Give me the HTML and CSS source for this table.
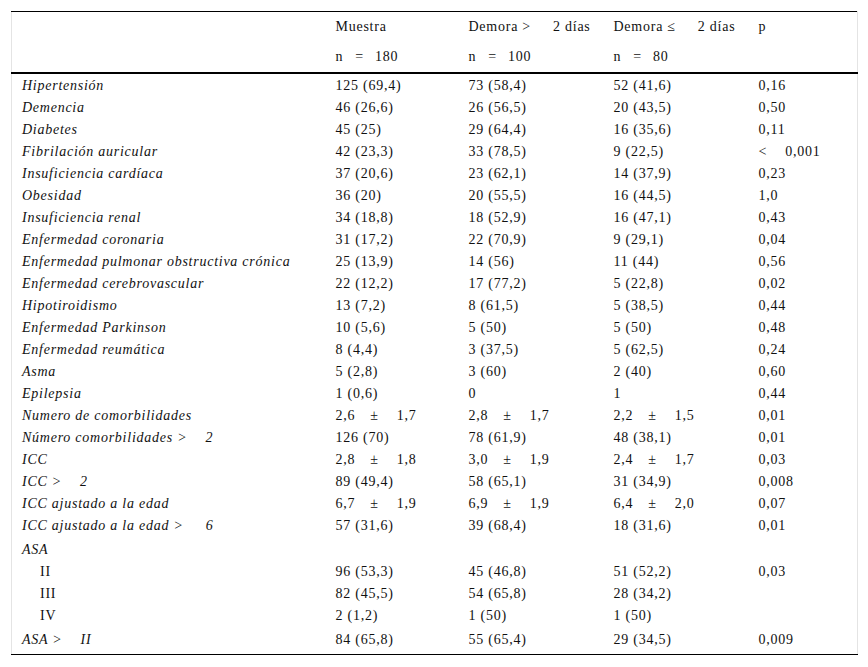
FILE: index.html
```html
<!DOCTYPE html>
<html lang="es">
<head>
<meta charset="utf-8">
<link rel="stylesheet" href="styles.css">
</head>
<body>
<div class="frame">
<table class="data">
<colgroup>
<col class="c1"><col class="c2"><col class="c3"><col class="c4"><col class="c5">
</colgroup>
<thead>
<tr class="h1"><th></th><th>Muestra</th><th>Demora &gt;<span class="hg"></span>2 días</th><th>Demora ≤<span class="hg2"></span>2 días</th><th>p</th></tr>
<tr class="h2"><th></th><th>n<span class="e1"></span>=<span class="e2"></span>180</th><th>n<span class="e1"></span>=<span class="e2"></span>100</th><th>n<span class="e1"></span>=<span class="e2"></span>80</th><th></th></tr>
</thead>
<tbody>
<tr><td class="lab">Hipertensión</td><td>125 (69,4)</td><td>73 (58,4)</td><td>52 (41,6)</td><td>0,16</td></tr>
<tr><td class="lab">Demencia</td><td>46 (26,6)</td><td>26 (56,5)</td><td>20 (43,5)</td><td>0,50</td></tr>
<tr><td class="lab">Diabetes</td><td>45 (25)</td><td>29 (64,4)</td><td>16 (35,6)</td><td>0,11</td></tr>
<tr><td class="lab">Fibrilación auricular</td><td>42 (23,3)</td><td>33 (78,5)</td><td>9 (22,5)</td><td>&lt;<span class="sp"></span>0,001</td></tr>
<tr><td class="lab">Insuficiencia cardíaca</td><td>37 (20,6)</td><td>23 (62,1)</td><td>14 (37,9)</td><td>0,23</td></tr>
<tr><td class="lab">Obesidad</td><td>36 (20)</td><td>20 (55,5)</td><td>16 (44,5)</td><td>1,0</td></tr>
<tr><td class="lab">Insuficiencia renal</td><td>34 (18,8)</td><td>18 (52,9)</td><td>16 (47,1)</td><td>0,43</td></tr>
<tr><td class="lab">Enfermedad coronaria</td><td>31 (17,2)</td><td>22 (70,9)</td><td>9 (29,1)</td><td>0,04</td></tr>
<tr><td class="lab">Enfermedad pulmonar obstructiva crónica</td><td>25 (13,9)</td><td>14 (56)</td><td>11 (44)</td><td>0,56</td></tr>
<tr><td class="lab">Enfermedad cerebrovascular</td><td>22 (12,2)</td><td>17 (77,2)</td><td>5 (22,8)</td><td>0,02</td></tr>
<tr><td class="lab">Hipotiroidismo</td><td>13 (7,2)</td><td>8 (61,5)</td><td>5 (38,5)</td><td>0,44</td></tr>
<tr><td class="lab">Enfermedad Parkinson</td><td>10 (5,6)</td><td>5 (50)</td><td>5 (50)</td><td>0,48</td></tr>
<tr><td class="lab">Enfermedad reumática</td><td>8 (4,4)</td><td>3 (37,5)</td><td>5 (62,5)</td><td>0,24</td></tr>
<tr><td class="lab">Asma</td><td>5 (2,8)</td><td>3 (60)</td><td>2 (40)</td><td>0,60</td></tr>
<tr><td class="lab">Epilepsia</td><td>1 (0,6)</td><td>0</td><td>1</td><td>0,44</td></tr>
<tr><td class="lab">Numero de comorbilidades</td><td>2,6<span class="pa"></span>±<span class="pb"></span>1,7</td><td>2,8<span class="pa"></span>±<span class="pb"></span>1,7</td><td>2,2<span class="pa"></span>±<span class="pb"></span>1,5</td><td>0,01</td></tr>
<tr><td class="lab">Número comorbilidades &gt;<span class="sp"></span>2</td><td>126 (70)</td><td>78 (61,9)</td><td>48 (38,1)</td><td>0,01</td></tr>
<tr><td class="lab">ICC</td><td>2,8<span class="pa"></span>±<span class="pb"></span>1,8</td><td>3,0<span class="pa"></span>±<span class="pb"></span>1,9</td><td>2,4<span class="pa"></span>±<span class="pb"></span>1,7</td><td>0,03</td></tr>
<tr><td class="lab">ICC &gt;<span class="sp"></span>2</td><td>89 (49,4)</td><td>58 (65,1)</td><td>31 (34,9)</td><td>0,008</td></tr>
<tr><td class="lab">ICC ajustado a la edad</td><td>6,7<span class="pa"></span>±<span class="pb"></span>1,9</td><td>6,9<span class="pa"></span>±<span class="pb"></span>1,9</td><td>6,4<span class="pa"></span>±<span class="pb"></span>2,0</td><td>0,07</td></tr>
<tr><td class="lab">ICC ajustado a la edad &gt;<span class="sp6"></span>6</td><td>57 (31,6)</td><td>39 (68,4)</td><td>18 (31,6)</td><td>0,01</td></tr>
<tr class="tall"><td class="lab">ASA</td><td></td><td></td><td></td><td></td></tr>
<tr><td class="sub">II</td><td>96 (53,3)</td><td>45 (46,8)</td><td>51 (52,2)</td><td>0,03</td></tr>
<tr><td class="sub">III</td><td>82 (45,5)</td><td>54 (65,8)</td><td>28 (34,2)</td><td></td></tr>
<tr><td class="sub">IV</td><td>2 (1,2)</td><td>1 (50)</td><td>1 (50)</td><td></td></tr>
<tr class="last"><td class="lab">ASA &gt;<span class="sp"></span>II</td><td>84 (65,8)</td><td>55 (65,4)</td><td>29 (34,5)</td><td>0,009</td></tr>
</tbody>
</table>
</div>
</body>
</html>
```
FILE: styles.css
```css
html, body {
  margin: 0;
  padding: 0;
  background: #ffffff;
}
body {
  font-family: "Liberation Serif", "Times New Roman", serif;
  font-size: 14px;
  letter-spacing: 0.75px;
  color: #111;
}
.frame {
  padding: 11px 10px 0 11px;
  width: 847px;
}
.data {
  width: 846px;
  border-collapse: collapse;
  table-layout: fixed;
  border-top: 1px solid #000;
  border-bottom: 1px solid #000;
  border-left: 1px solid #e4e4e4;
  border-right: 1px solid #e4e4e4;
}
.c1 { width: 314px; }
.c2 { width: 133px; }
.c3 { width: 145px; }
.c4 { width: 145px; }
.c5 { width: 109px; }
th {
  font-weight: normal;
  text-align: left;
  padding: 0 0 0 10px;
  height: 30px;
  white-space: nowrap;
}
.h2 th {
  border-bottom: 2px solid #000;
}
td {
  padding: 0 0 0 10px;
  height: 22px;
  white-space: nowrap;
  line-height: 15px;
}
.lab { font-style: italic; }
.sub { padding-left: 28px; }
.tall td { height: 22px; padding-top: 2px; }
.last td { height: 26px; padding-bottom: 2px; }
.sp { display: inline-block; width: 18px; }
.sp6 { display: inline-block; width: 22px; }
.hg { display: inline-block; width: 22px; }
.hg2 { display: inline-block; width: 22px; }
.e1 { display: inline-block; width: 12px; }
.e2 { display: inline-block; width: 11px; }
.pa { display: inline-block; width: 15px; }
.pb { display: inline-block; width: 18px; }
```
